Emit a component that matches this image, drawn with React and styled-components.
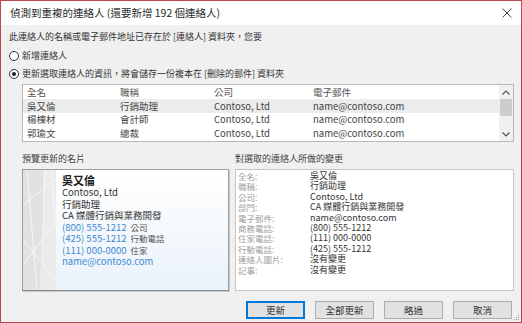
import React from "react";
import styled, { createGlobalStyle } from "styled-components";

const GlobalStyle = createGlobalStyle`
  html, body {
    margin: 0;
    padding: 0;
    background: #f0f0f0;
  }
  * {
    box-sizing: border-box;
  }
`;

const font = `"Noto Sans CJK TC", "Noto Sans", sans-serif`;

const Window = styled.div`
  width: 522px;
  height: 323px;
  border: 1px solid #b9474b;
  background: #f0f0f0;
  display: flex;
  flex-direction: column;
  font-family: ${font};
  color: #333;
  position: relative;
`;

const TitleBar = styled.div`
  height: 24px;
  background: #fff;
  display: flex;
  align-items: center;
  justify-content: space-between;
  padding: 0 9px 0 9px;
  flex-shrink: 0;
`;

const Title = styled.div`
  font-size: 10.5px;
  color: #2b2b2b;
  line-height: 14px;
`;

const Close = styled.div`
  width: 10px;
  height: 10px;
  display: flex;
`;

const Body = styled.div`
  flex: 1;
  display: flex;
  flex-direction: column;
  padding: 6px 7px 0 8px;
`;

const Prompt = styled.div`
  font-size: 9px;
  line-height: 12px;
  color: #333;
`;

const Options = styled.div`
  display: flex;
  flex-direction: column;
  gap: 6px;
  margin-top: 7px;
`;

const Option = styled.label`
  display: flex;
  align-items: center;
  gap: 3px;
  font-size: 9px;
  line-height: 12px;
  color: #333;
`;

const Radio = styled.span`
  width: 10px;
  height: 10px;
  border-radius: 50%;
  border: 1px solid #333;
  background: #fff;
  display: flex;
  align-items: center;
  justify-content: center;
  &::after {
    content: "";
    width: 4px;
    height: 4px;
    border-radius: 50%;
    background: ${(p) => (p.checked ? "#222" : "transparent")};
  }
`;

const Table = styled.div`
  margin: 4px 0 0 13px;
  height: 58px;
  border: 1px solid #b8b8b8;
  background: #fff;
  display: flex;
`;

const Rows = styled.div`
  flex: 1;
  display: flex;
  flex-direction: column;
`;

const Row = styled.div`
  display: grid;
  grid-template-columns: 93px 94px 99px 1fr;
  height: ${(p) => (p.header ? "14px" : "13.5px")};
  align-items: center;
  background: ${(p) => (p.selected ? "#ececec" : "#fff")};
  font-size: 9.5px;
  line-height: 12px;
  color: ${(p) => (p.header ? "#555" : "#444")};
`;

const Cell = styled.div`
  padding-left: 4px;
  white-space: nowrap;
  overflow: hidden;
`;

const Scrollbar = styled.div`
  width: 14px;
  background: #f0f0f0;
  display: flex;
  flex-direction: column;
  align-items: center;
`;

const Arrow = styled.div`
  height: 14px;
  width: 14px;
  display: flex;
  align-items: center;
  justify-content: center;
`;

const Thumb = styled.div`
  width: 12px;
  height: 17px;
  background: #cdcdcd;
`;

const Track = styled.div`
  flex: 1;
`;

const Lower = styled.div`
  display: flex;
  gap: 6px;
  margin: 11px 0 0 13px;
`;

const Group = styled.div`
  display: flex;
  flex-direction: column;
  width: ${(p) => p.width}px;
`;

const GroupLabel = styled.div`
  font-size: 9px;
  line-height: 12px;
  color: #444;
  margin-bottom: 4px;
`;

const Card = styled.div`
  height: 122px;
  border: 1px solid #9d9d9d;
  border-bottom-color: #8a8a8a;
  box-shadow: 1px 1px 0 #c8c8c8;
  background: linear-gradient(180deg, #ffffff 0%, #f4f8fc 55%, #e9f2fb 100%);
  display: flex;
`;

const CardArt = styled.div`
  width: 33px;
  background: #e4e4e4;
  display: flex;
`;

const CardText = styled.div`
  padding: 3px 0 0 6px;
  display: flex;
  flex-direction: column;
`;

const CardName = styled.div`
  font-size: 11px;
  font-weight: 700;
  line-height: 14px;
  color: #1e1e1e;
`;

const CardLine = styled.div`
  font-size: 9.5px;
  line-height: 11.5px;
  color: ${(p) => (p.blue ? "#3c8ad4" : "#333")};
  white-space: nowrap;
  span {
    color: #555;
    font-size: 8.5px;
    margin-left: 4px;
  }
`;

const Changes = styled.div`
  height: 122px;
  border: 1px solid #c6c6c6;
  background: #fff;
  padding: 1px 0 0 2px;
  display: grid;
  grid-template-columns: 72px 1fr;
  grid-auto-rows: 10.4px;
  align-content: start;
`;

const ChangeLabel = styled.div`
  color: #a0a0a0;
  font-size: 8.5px;
  line-height: 10.4px;
  white-space: nowrap;
`;

const ChangeValue = styled.div`
  color: #333;
  font-size: 9px;
  line-height: 10.4px;
  white-space: nowrap;
`;

const Buttons = styled.div`
  display: flex;
  justify-content: flex-end;
  gap: 10px;
  margin-top: 10px;
  padding-right: 2px;
`;

const Button = styled.button`
  width: 59px;
  height: 18px;
  padding: 0;
  font-family: ${font};
  font-size: 9.5px;
  color: #333;
  background: #e1e1e1;
  border: 1px solid ${(p) => (p.primary ? "#0078d7" : "#adadad")};
  box-shadow: ${(p) => (p.primary ? "inset 0 0 0 1px #0078d7" : "none")};
`;

const Grip = styled.div`
  position: absolute;
  right: 1px;
  bottom: 1px;
  width: 8px;
  height: 8px;
  display: flex;
`;

const rows = [
  ["吳又倫", "行銷助理", "Contoso, Ltd", "name@contoso.com"],
  ["楊棟材", "會計師", "Contoso, Ltd", "name@contoso.com"],
  ["郭瑜文", "總裁", "Contoso, Ltd", "name@contoso.com"],
];

const changes = [
  ["全名:", "吳又倫"],
  ["職稱:", "行銷助理"],
  ["公司:", "Contoso, Ltd"],
  ["部門:", "CA 媒體行銷與業務開發"],
  ["電子郵件:", "name@contoso.com"],
  ["商務電話:", "(800) 555-1212"],
  ["住家電話:", "(111) 000-0000"],
  ["行動電話:", "(425) 555-1212"],
  ["連絡人圖片:", "沒有變更"],
  ["記事:", "沒有變更"],
];

function CardPattern() {
  return (
    <svg width="33" height="120" viewBox="0 0 33 120">
      <rect width="33" height="120" fill="#e2e2e2" />
      <rect x="20" width="13" height="120" fill="#ebebeb" />
      <g stroke="#f7f7f7" strokeWidth="1" fill="none">
        <line x1="4" y1="0" x2="14" y2="120" />
        <line x1="-6" y1="40" x2="33" y2="8" />
        <line x1="0" y1="95" x2="33" y2="52" />
        <line x1="22" y1="0" x2="18" y2="120" />
        <line x1="0" y1="70" x2="33" y2="110" />
        <line x1="28" y1="0" x2="33" y2="60" />
      </g>
    </svg>
  );
}

export default function App() {
  return (
    <>
      <GlobalStyle />
      <Window>
        <TitleBar>
          <Title>偵測到重複的連絡人 (還要新增 192 個連絡人)</Title>
          <Close>
            <svg width="10" height="10" viewBox="0 0 10 10">
              <path d="M0.5 0.5 L9.5 9.5 M9.5 0.5 L0.5 9.5" stroke="#444" strokeWidth="1" />
            </svg>
          </Close>
        </TitleBar>
        <Body>
          <Prompt>此連絡人的名稱或電子郵件地址已存在於 [連絡人] 資料夾，您要</Prompt>
          <Options>
            <Option>
              <Radio />
              新增連絡人
            </Option>
            <Option>
              <Radio checked />
              更新選取連絡人的資訊，將會儲存一份複本在 [刪除的郵件] 資料夾
            </Option>
          </Options>
          <Table>
            <Rows>
              <Row header>
                <Cell>全名</Cell>
                <Cell>職稱</Cell>
                <Cell>公司</Cell>
                <Cell>電子郵件</Cell>
              </Row>
              {rows.map((r, i) => (
                <Row key={r[0]} selected={i === 0}>
                  {r.map((c, j) => (
                    <Cell key={j}>{c}</Cell>
                  ))}
                </Row>
              ))}
            </Rows>
            <Scrollbar>
              <Arrow>
                <svg width="8" height="5" viewBox="0 0 8 5">
                  <path d="M0.5 4.5 L4 1 L7.5 4.5" stroke="#555" strokeWidth="1.2" fill="none" />
                </svg>
              </Arrow>
              <Thumb />
              <Track />
              <Arrow>
                <svg width="8" height="5" viewBox="0 0 8 5">
                  <path d="M0.5 0.5 L4 4 L7.5 0.5" stroke="#555" strokeWidth="1.2" fill="none" />
                </svg>
              </Arrow>
            </Scrollbar>
          </Table>
          <Lower>
            <Group width={207}>
              <GroupLabel>預覽更新的名片</GroupLabel>
              <Card>
                <CardArt>
                  <CardPattern />
                </CardArt>
                <CardText>
                  <CardName>吳又倫</CardName>
                  <CardLine>Contoso, Ltd</CardLine>
                  <CardLine>行銷助理</CardLine>
                  <CardLine>CA 媒體行銷與業務開發</CardLine>
                  <CardLine blue>
                    (800) 555-1212<span>公司</span>
                  </CardLine>
                  <CardLine blue>
                    (425) 555-1212<span>行動電話</span>
                  </CardLine>
                  <CardLine blue>
                    (111) 000-0000<span>住家</span>
                  </CardLine>
                  <CardLine blue>name@contoso.com</CardLine>
                </CardText>
              </Card>
            </Group>
            <Group width={279}>
              <GroupLabel>對選取的連絡人所做的變更</GroupLabel>
              <Changes>
                {changes.map(([l, v]) => (
                  <React.Fragment key={l}>
                    <ChangeLabel>{l}</ChangeLabel>
                    <ChangeValue>{v}</ChangeValue>
                  </React.Fragment>
                ))}
              </Changes>
            </Group>
          </Lower>
          <Buttons>
            <Button primary>更新</Button>
            <Button>全部更新</Button>
            <Button>略過</Button>
            <Button>取消</Button>
          </Buttons>
        </Body>
        <Grip>
          <svg width="8" height="8" viewBox="0 0 8 8" fill="#a0a0a0">
            <rect x="6" y="2" width="1" height="1" />
            <rect x="4" y="4" width="1" height="1" />
            <rect x="6" y="4" width="1" height="1" />
            <rect x="2" y="6" width="1" height="1" />
            <rect x="4" y="6" width="1" height="1" />
            <rect x="6" y="6" width="1" height="1" />
          </svg>
        </Grip>
      </Window>
    </>
  );
}
